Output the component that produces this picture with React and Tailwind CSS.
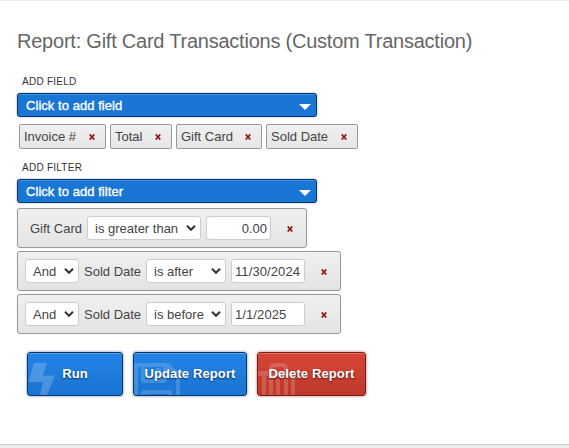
const fields = [
  { name: "Invoice #", width: "w-[87px]" },
  { name: "Total", width: "w-[62px]" },
  { name: "Gift Card", width: "w-[86px]" },
  { name: "Sold Date", width: "w-[92px]" },
];

const dateFilters = [
  { operator: "is after", value: "11/30/2024" },
  { operator: "is before", value: "1/1/2025" },
];

function RemoveIcon({ className = "" }) {
  return (
    <svg viewBox="0 0 6 6" className={`h-[6px] w-[6px] shrink-0 ${className}`} fill="none" stroke="#931212" strokeWidth="1.6">
      <path d="M.7.4l4.6 5.2M5.3.4L.7 5.6" />
    </svg>
  );
}

function AddBar({ label }) {
  return (
    <button className="flex h-6 w-[300px] items-center justify-between rounded-[3px] border border-[#0b3768] bg-[#1a76d4] pr-[5px] pl-2 text-[13px] leading-none text-white shadow-[0_0_2px_rgba(20,60,110,0.5),inset_0_1px_0_#3f91e2]">
      <span className="tracking-[0.05px] [-webkit-text-stroke:0.35px_#fff]">{label}</span>
      <svg viewBox="0 0 12 6" className="mt-[3px] h-[6px] w-3" fill="#fff">
        <path d="M0 0h12L6 6z" />
      </svg>
    </button>
  );
}

function Select({ children, className }) {
  return (
    <button className={`flex h-6 shrink-0 items-center justify-between rounded-[3px] border border-[#ccc] bg-white pr-1 pl-[7px] ${className}`}>
      <span className="pt-px">{children}</span>
      <svg viewBox="0 0 10 6" className="h-[6px] w-[10px]" fill="none" stroke="#333" strokeWidth="2">
        <path d="M1 .8l4 4 4-4" />
      </svg>
    </button>
  );
}

function FilterRow({ children, className }) {
  return (
    <div className={`flex h-10 items-center rounded-[3px] border border-[#999] bg-linear-to-b from-[#f0f0f0] to-[#e4e4e4] shadow-[0_0_1px_rgba(0,0,0,0.25)] ${className}`}>
      {children}
    </div>
  );
}

const blueButton =
  "border-[#0b3768] bg-linear-to-b from-[#2384e6] to-[#1a74d2] shadow-[0_0_3px_rgba(20,60,110,0.6),inset_0_1px_0_#55a2ec]";
const redButton =
  "border-[#7c1c14] bg-linear-to-b from-[#d64537] to-[#bf382b] shadow-[0_0_3px_rgba(110,30,20,0.6),inset_0_1px_0_#e47268]";

function ActionButton({ label, className, icon }) {
  return (
    <button className={`relative h-11 overflow-hidden rounded-[3px] border text-[13px] font-bold tracking-[0.12px] whitespace-nowrap text-white ${className}`}>
      {icon}
      <span className="relative [text-shadow:0_1px_2px_rgba(0,0,0,0.6)]">{label}</span>
    </button>
  );
}

export default function App() {
  return (
    <div className="flex h-[448px] w-[569px] flex-col border-t border-[#ecedf2] bg-white font-['Liberation_Sans',Arial,sans-serif] text-[13px] text-[#444]">
      <main className="flex-1 pl-[17px]">
        <h1 className="mt-7 h-6 text-[20px] leading-6 tracking-[-0.23px] whitespace-nowrap text-[#666]">
          Report: Gift Card Transactions (Custom Transaction)
        </h1>

        {/* Fields */}
        <div className="mt-[23px] h-[17px] pl-[5px] text-[10px] leading-3 tracking-[0.25px] text-[#333]">ADD FIELD</div>
        <AddBar label="Click to add field" />
        <div className="mt-[7px] ml-[2px] flex gap-1">
          {fields.map((field) => (
            <div
              key={field.name}
              className={`flex h-[25px] items-center justify-between rounded-[2px] border border-[#999] bg-linear-to-b from-[#f0f0f0] to-[#e6e6e6] pr-[10px] pl-1 whitespace-nowrap ${field.width}`}
            >
              <span>{field.name}</span>
              <RemoveIcon className="mt-px" />
            </div>
          ))}
        </div>

        {/* Filters */}
        <div className="mt-[13px] h-[17px] pl-[5px] text-[10px] leading-3 tracking-[0.25px] text-[#333]">ADD FILTER</div>
        <AddBar label="Click to add filter" />
        <div className="mt-[5px] flex flex-col gap-[3px]">
          <FilterRow className="w-[290px] pl-3">
            <span className="w-[57px] pt-px whitespace-nowrap">Gift Card</span>
            <Select className="w-[114px]">is greater than</Select>
            <input
              defaultValue="0.00"
              className="ml-[5px] h-6 w-[65px] rounded-[3px] border border-[#ccc] bg-white pr-[3px] text-right outline-none"
            />
            <RemoveIcon className="mt-px ml-4" />
          </FilterRow>
          {dateFilters.map((filter) => (
            <FilterRow key={filter.operator} className="w-[324px] pl-[7px]">
              <Select className="w-[54px]">And</Select>
              <span className="ml-[5px] w-[62px] pt-px whitespace-nowrap">Sold Date</span>
              <Select className="w-[80px]">{filter.operator}</Select>
              <input
                defaultValue={filter.value}
                className="ml-[5px] h-6 w-[74px] rounded-[3px] border border-[#ccc] bg-white pl-[3px] tracking-[0.1px] outline-none"
              />
              <RemoveIcon className="mt-px ml-4" />
            </FilterRow>
          ))}
        </div>

        {/* Actions */}
        <div className="mt-[18px] ml-[10px] flex gap-[10px]">
          <ActionButton
            label="Run"
            className={`w-24 ${blueButton}`}
            icon={
              <svg viewBox="0 0 28 32" className="absolute top-[10px] left-0 h-8 w-7" fill="#fff" fillOpacity=".2">
                <path d="M6 0h13l-4 12.5h12L19 32h-7l3-13H.5z" />
              </svg>
            }
          />
          <ActionButton
            label="Update Report"
            className={`w-[114px] ${blueButton}`}
            icon={
              <svg viewBox="0 0 46 32" className="absolute top-[10px] left-0 h-8 w-[46px]" fill="#fff" fillOpacity=".17" fillRule="evenodd">
                <path d="M0 0h35l11 11v21h-4V13L33 4v13q0 3-3 3H10q-3 0-3-3V4H4v28H0zM11 4v11q0 1 1 1h16q1 0 1-1V4zM22 5h5v9h-5zM7 32v-2q0-3 3-3h25q3 0 3 3v2h-4v-1H11v1z" />
              </svg>
            }
          />
          <ActionButton
            label="Delete Report"
            className={`w-[109px] ${redButton}`}
            icon={
              <svg viewBox="0 0 38 32" className="absolute top-[10px] left-0 h-8 w-[38px]" fill="#fff" fillOpacity=".17" fillRule="evenodd">
                <path d="M0 8h11V6q0-6 6-6h7q6 0 6 6v2h8v5H0zM15 8h11V6q0-2-3-2h-5q-3 0-3 2zM4 13h4v19H4zM11 16h4v16h-4zM18 16h4v16h-4zM26 16h4v16h-4zM33 13h4v19h-4z" />
              </svg>
            }
          />
        </div>
      </main>
      <div className="h-1 border-t border-[#c8c8cb] bg-[#eeeef0]" />
    </div>
  );
}
